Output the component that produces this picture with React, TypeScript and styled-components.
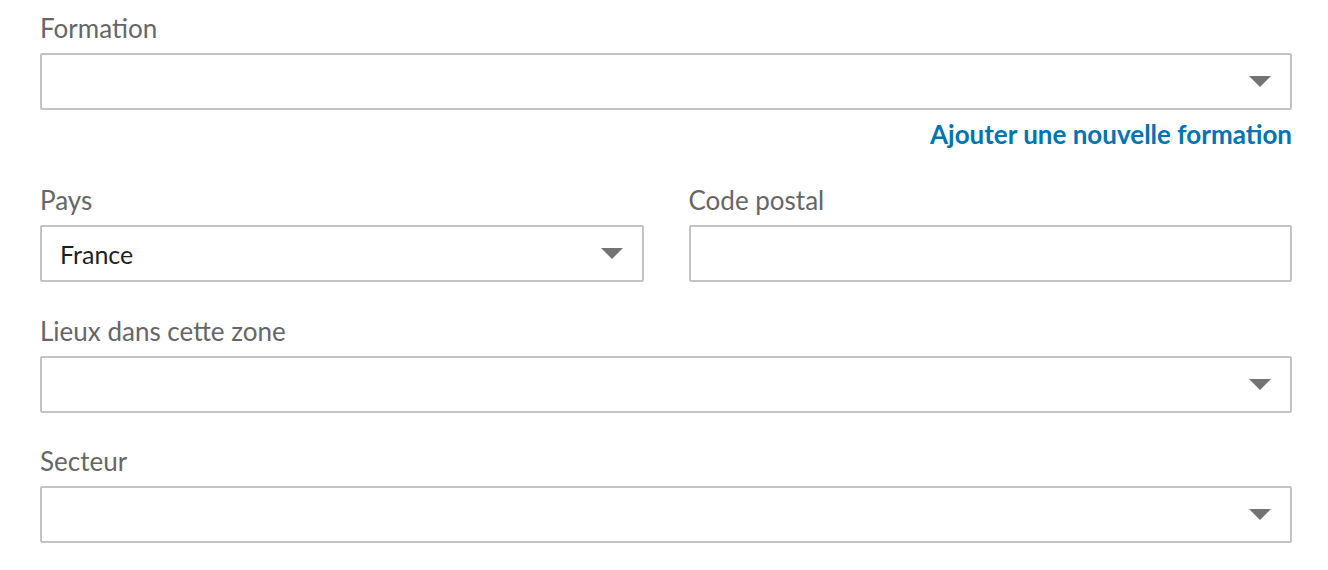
import React from "react";
import styled, { createGlobalStyle } from "styled-components";

const Global = createGlobalStyle`
  html, body { margin: 0; padding: 0; background: #ffffff; }
  body { font-family: Lato, "Open Sans", sans-serif; -webkit-font-smoothing: antialiased; }
`;

const Form = styled.form`
  width: 1252px;
  padding: 10px 0 0 40px;
  display: flex;
  flex-direction: column;
`;

const Field = styled.div<{ $gapTop?: number }>`
  display: flex;
  flex-direction: column;
  margin-top: ${(p) => p.$gapTop ?? 0}px;
  min-width: 0;
`;

const Label = styled.label`
  font-size: 26px;
  line-height: 30px;
  color: #666666;
  padding-top: 3px;
  margin-bottom: 10px;
`;

const Control = styled.div`
  box-sizing: border-box;
  height: 57px;
  border: 2px solid #c3c3c3;
  border-radius: 2px;
  display: flex;
  align-items: center;
  justify-content: space-between;
  padding: 0 19px 0 18px;
  background: #fff;
`;

const Value = styled.span`
  font-size: 25px;
  color: #1f1f1f;
`;

const Caret = styled.span`
  width: 0;
  height: 0;
  border-left: 11px solid transparent;
  border-right: 11px solid transparent;
  border-top: 11px solid #737373;
`;

const LinkRow = styled.div`
  display: flex;
  justify-content: flex-end;
  margin-top: 9px;
`;

const AddLink = styled.a`
  font-size: 26px;
  line-height: 30px;
  font-weight: 700;
  color: #0073b1;
  text-decoration: none;
`;

const Row = styled.div`
  display: grid;
  grid-template-columns: 1fr 1fr;
  column-gap: 45px;
  margin-top: 33px;
`;

const Select = ({ value }: { value?: string }) => (
  <Control>
    <Value>{value ?? ""}</Value>
    <Caret />
  </Control>
);

export default function App() {
  return (
    <>
      <Global />
      <Form>
        <Field>
          <Label>Formation</Label>
          <Select />
        </Field>
        <LinkRow>
          <AddLink href="#">Ajouter une nouvelle formation</AddLink>
        </LinkRow>
        <Row>
          <Field>
            <Label>Pays</Label>
            <Select value="France" />
          </Field>
          <Field>
            <Label>Code postal</Label>
            <Control />
          </Field>
        </Row>
        <Field $gapTop={31}>
          <Label>Lieux dans cette zone</Label>
          <Select />
        </Field>
        <Field $gapTop={30}>
          <Label>Secteur</Label>
          <Select />
        </Field>
      </Form>
    </>
  );
}
